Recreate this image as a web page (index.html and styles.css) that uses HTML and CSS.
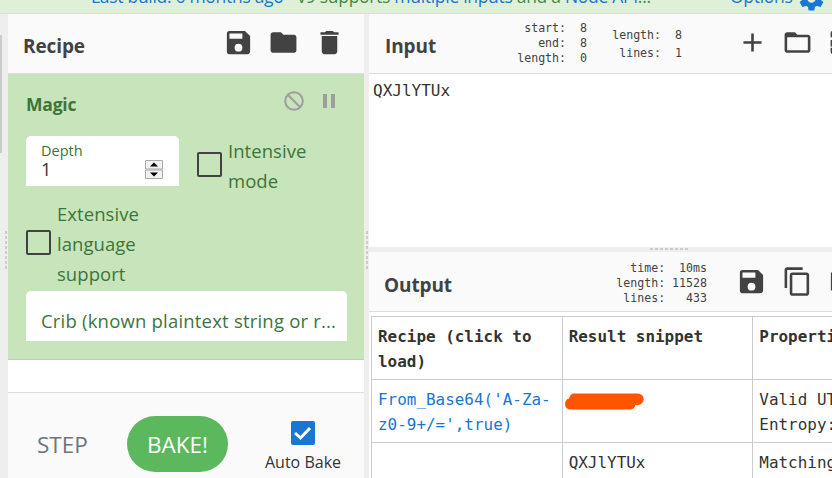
FILE: index.html
```html
<!DOCTYPE html>
<html lang="en">
<head>
<meta charset="utf-8">
<title>CyberChef</title>
<link rel="stylesheet" href="styles.css">
</head>
<body>
<header class="banner">
  <p class="notice"><a>Last build: 6 months ago</a> - v9 supports <a>multiple inputs</a> and a <a>Node API</a>...</p>
  <a class="options">Options</a>
  <svg class="gear" viewBox="0 0 24 24"><path d="M19.43 12.98c.04-.32.07-.64.07-.98s-.03-.66-.07-.98l2.11-1.65c.19-.15.24-.42.12-.64l-2-3.46c-.12-.22-.39-.3-.61-.22l-2.49 1c-.52-.4-1.08-.73-1.69-.98l-.38-2.65A.49.49 0 0 0 14 2h-4c-.25 0-.46.18-.49.42l-.38 2.65c-.61.25-1.17.59-1.69.98l-2.49-1c-.23-.09-.49 0-.61.22l-2 3.46c-.13.22-.07.49.12.64l2.11 1.65c-.04.32-.07.65-.07.98s.03.66.07.98l-2.11 1.65c-.19.15-.24.42-.12.64l2 3.46c.12.22.39.3.61.22l2.49-1c.52.4 1.08.73 1.69.98l.38 2.65c.03.24.24.42.49.42h4c.25 0 .46-.18.49-.42l.38-2.65c.61-.25 1.17-.59 1.69-.98l2.49 1c.23.09.49 0 .61-.22l2-3.46c.12-.22.07-.49-.12-.64l-2.11-1.65zM12 15.500a3.500 3.500 0 1 1 0-7 3.500 3.500 0 0 1 0 7z"/></svg>
</header>
<main class="workspace">
  <div class="gutter gutter-left"><i class="scroll"></i><i class="grip"></i></div>
  <section class="recipe">
    <div class="title">
      <h2>Recipe</h2>
      <div class="icons">
        <svg viewBox="0 0 24 24"><path d="M17 3H5a2 2 0 0 0-2 2v14a2 2 0 0 0 2 2h14c1.100 0 2-.9 2-2V7l-4-4zm-5 16a3 3 0 1 1 0-6 3 3 0 0 1 0 6zm3-10H5V5h10v4z"/></svg>
        <svg viewBox="0 0 24 24"><path d="M10 4H4c-1.100 0-2 .9-2 2v12c0 1.100.9 2 2 2h16c1.100 0 2-.9 2-2V8c0-1.100-.9-2-2-2h-8l-2-2z"/></svg>
        <svg viewBox="0 0 24 24"><path d="M6 19c0 1.100.9 2 2 2h8c1.100 0 2-.9 2-2V7H6v12zM19 4h-3.500l-1-1h-5l-1 1H5v2h14V4z"/></svg>
      </div>
    </div>
    <article class="operation">
      <div class="op-head">
        <h3>Magic</h3>
        <svg class="disable" viewBox="0 0 20 20"><circle cx="10" cy="10" r="8.800"/><path d="M3.800 3.800l12.400 12.400"/></svg>
        <svg class="pause" viewBox="0 0 14 14"><path d="M1 0h4v14H1zM9 0h4v14H9z"/></svg>
      </div>
      <div class="args">
        <div class="field depth">
          <div><label>Depth</label><b>1</b></div>
          <svg class="spin" viewBox="0 0 18 19"><path class="key" d="M.5.500h17v8.500H.5zM.5 10h17v8.500H.5z"/><path d="M5 6.500L9 2.500l4 4zM5 12.500l4 4 4-4z"/></svg>
        </div>
        <div class="check intensive"><i class="box"></i><span>Intensive<br>mode</span></div>
      </div>
      <div class="check extensive"><i class="box"></i><span>Extensive<br>language<br>support</span></div>
      <div class="field crib"><span>Crib (known plaintext string or r...</span></div>
    </article>
    <footer class="controls">
      <span class="step">STEP</span>
      <span class="bake"><span>BAKE!</span></span>
      <div class="auto">
        <svg viewBox="0 0 24 24"><rect width="24" height="24" rx="2"/><path d="M4 12l5.500 5L19 7"/></svg>
        <span>Auto Bake</span>
      </div>
    </footer>
  </section>
  <div class="gutter gutter-mid"><i class="grip"></i></div>
  <section class="io">
    <div class="title">
      <h2>Input</h2>
      <pre class="stats selection">start:  8
end:  8
length:  0</pre>
      <pre class="stats size">length:  8
lines:  1</pre>
      <div class="icons">
        <svg viewBox="0 0 24 24"><path d="M19 13h-6v6h-2v-6H5v-2h6V5h2v6h6v2z"/></svg>
        <svg viewBox="0 0 24 24"><path d="M20 6h-8l-2-2H4c-1.100 0-1.990.9-1.990 2L2 18c0 1.100.9 2 2 2h16c1.100 0 2-.9 2-2V8c0-1.100-.9-2-2-2zm0 12H4V8h16v10z"/></svg>
        <svg viewBox="0 0 24 24"><path d="M4 3h16v2H4v3H2V5a2 2 0 0 1 2-2zM2 10h12V6l6 6-6 6v-4H4v1H2zM2 16h2v3h16v2H4a2 2 0 0 1-2-2z"/></svg>
      </div>
    </div>
    <pre class="input-text">QXJlYTUx</pre>
    <div class="gutter-row"><i class="grip-row"></i></div>
    <div class="title out-title">
      <h2>Output</h2>
      <pre class="stats result">  time:  10ms
length: 11528
 lines:   433</pre>
      <div class="icons">
        <svg viewBox="0 0 24 24"><path d="M17 3H5a2 2 0 0 0-2 2v14a2 2 0 0 0 2 2h14c1.100 0 2-.9 2-2V7l-4-4zm-5 16a3 3 0 1 1 0-6 3 3 0 0 1 0 6zm3-10H5V5h10v4z"/></svg>
        <svg viewBox="0 0 24 24"><path d="M16 1H4c-1.100 0-2 .9-2 2v14h2V3h12V1zm3 4H8c-1.100 0-2 .9-2 2v14c0 1.100.9 2 2 2h11c1.100 0 2-.9 2-2V7c0-1.100-.9-2-2-2zm0 16H8V7h11v14z"/></svg>
        <svg viewBox="0 0 24 24"><path d="M3 5h18v14H3z"/></svg>
      </div>
    </div>
    <div class="output">
      <table>
        <tr><th>Recipe (click to<br>load)</th><th>Result snippet</th><th>Properties</th></tr>
        <tr><td><a>From_Base64('A-Za-<br>z0-9+/=',true)</a></td><td class="redacted"><svg viewBox="0 0 80 17"><path d="M9 .5h65a5.700 5.700 0 0 1 0 11.400h-2.500a6 6 0 0 1-5 4.600H6A5.600 5.600 0 0 1 5 5.600q1-4 4-5.100z"/></svg></td><td>Valid UTF8<br>Entropy: 2.75</td></tr>
        <tr><td></td><td>QXJlYTUx</td><td>Matching ops:</td></tr>
      </table>
    </div>
  </section>
</main>
</body>
</html>
```
FILE: styles.css
```css
* { box-sizing: border-box; }
body {
  margin: 0;
  width: 832px;
  height: 478px;
  overflow: hidden;
  display: flex;
  flex-direction: column;
  background: #fff;
  color: #424242;
  font-family: "Open Sans", sans-serif;
}
h2, h3, p, pre { margin: 0; }
svg { display: block; flex: none; }
i { display: block; }
a { color: #1976d2; }

.banner {
  flex: none;
  height: 14px;
  display: flex;
  align-items: flex-end;
  overflow: hidden;
  background: #dff0d8;
  border-bottom: 1px solid #ddd;
  color: #468847;
  font-size: 17.500px;
  line-height: 24px;
  white-space: nowrap;
}
.notice { flex: none; width: 639px; padding-left: 91px; margin-bottom: 5px; letter-spacing: -.3px; }
.options { flex: none; width: 67px; margin: 0 0 5px 91px; letter-spacing: -.3px; }
.gear { width: 29px; height: 29px; margin-bottom: 0; fill: #1976d2; }

.workspace { flex: 1; min-height: 0; display: flex; }
.gutter { flex: none; background: #eee; display: flex; flex-direction: column; }
.gutter-left { width: 8px; }
.gutter-mid { width: 5px; }
.grip { width: 2px; height: 38px; background: repeating-linear-gradient(#ccc 0 3px, #eee 3px 5px); }
.gutter-left .scroll { width: 2px; height: 118px; margin-top: 21px; background: #ccc; }
.gutter-left .grip { margin: 78px 0 0 5px; }
.gutter-mid .grip { margin: 217px 0 0 2px; }

.recipe { flex: none; width: 356px; display: flex; flex-direction: column; }
.title {
  flex: none;
  height: 60px;
  display: flex;
  align-items: center;
  background: #fafafa;
  border-bottom: 1px solid #ddd;
  padding-left: 15px;
}
h2 { font-size: 19px; line-height: 28px; margin-top: 5px; letter-spacing: -.1px; }
.icons { display: flex; gap: 14.500px; margin-bottom: 2px; }
.icons svg { width: 31px; height: 31px; fill: #424242; }
.recipe .icons { margin-left: auto; margin-right: 19.500px; }

.operation {
  flex: none;
  height: 286px;
  padding: 16px 17px 0 18px;
  background: #c8e4ba;
  border-bottom: 1px solid #b3d9a3;
  color: #3a763a;
}
.op-head { display: flex; align-items: center; height: 28px; }
h3 { font-size: 17.500px; line-height: 28px; letter-spacing: -.2px; }
.disable { width: 20px; height: 20px; margin: -6px 0 0 auto; fill: none; stroke: #9e9e9e; stroke-width: 2; }
.pause { width: 14px; height: 14px; margin: -6px 11px 0 18px; fill: #9e9e9e; }
.args { display: flex; margin-top: 18px; height: 64px; }
.field { background: #fff; border-radius: 5px 5px 0 0; height: 50px; }
.depth { width: 153px; display: flex; justify-content: space-between; padding: 5px 16px 0 15px; }
.depth label { display: block; font-size: 14.500px; line-height: 19px; }
.depth b { display: block; font-weight: 500; font-size: 18px; line-height: 19px; color: #333; }
.spin { width: 18px; height: 19px; margin-top: 19px; fill: #000; }
.spin .key { fill: #f0f0f0; stroke: #aaa; }
.check { display: flex; align-items: center; font-size: 18.500px; line-height: 30px; letter-spacing: .05px; }
.box { flex: none; width: 25px; height: 25px; border: 2px solid #424242; border-radius: 2px; }
.intensive { height: 60px; margin-left: 18px; gap: 6px; }
.intensive .box { margin-top: -3px; }
.extensive { height: 90px; gap: 6px; margin-top: -1px; }
.extensive .box { margin-top: -3px; }
.crib { margin-top: 2px; padding: 15px 0 0 15px; font-size: 18.500px; line-height: 29px; letter-spacing: .2px; white-space: nowrap; }

.controls {
  height: 86px;
  flex: none;
  margin-top: 32px;
  display: flex;
  background: #fafafa;
  border-top: 1px solid #ddd;
}
.step { width: 90px; margin: 35px 0 0 29px; font-size: 22.500px; line-height: 34px; color: #6c757d; }
.bake {
  width: 101px;
  height: 56px;
  margin-top: 23px;
  padding-top: 12px;
  border-radius: 28px;
  background: #5cb85c;
  color: #fff;
  font-size: 22.500px;
  line-height: 33px;
  text-align: center;
}
.auto { margin: 28px 0 0 35px; width: 80px; display: flex; flex-direction: column; align-items: center; font-size: 16px; line-height: 22px; color: #333; white-space: nowrap; }
.auto svg { width: 24px; height: 24px; margin-bottom: 6px; fill: #1976d2; }
.auto path { fill: none; stroke: #fff; stroke-width: 3; }

.io { flex: 1; min-width: 0; overflow: hidden; display: flex; flex-direction: column; }
pre, table { font-family: "DejaVu Sans Mono", monospace; }
.io .title { padding-left: 16px; }
.io .title h2 { width: 78px; flex: none; }
.io .out-title { padding-left: 15px; }
.io .out-title h2 { margin-top: 7px; }
.stats { flex: none; font-size: 11.600px; line-height: 15px; text-align: right; }
.selection { width: 70px; margin-left: 54px; }
.size { width: 70px; margin-left: 25px; line-height: 18px; }
.result { width: 92px; margin: 3px 0 0 153px; }
.io .icons { flex: none; margin-left: 54.500px; }
.result + .icons { margin-left: 29px; margin-top: 2px; }
.input-text { flex: none; height: 173px; padding: 4px 4px 0; color: #333; font-size: 16px; line-height: 25px; }
.gutter-row { flex: none; height: 5px; padding: 1px 0 0 281px; background: #eee; }
.grip-row { width: 38px; height: 2px; background: repeating-linear-gradient(90deg, #ccc 0 3px, #eee 3px 5px); }
.output { padding: 4px 0 0 2px; }
table { width: 573px; table-layout: fixed; border-collapse: collapse; color: #333; font-size: 15.950px; line-height: 25px; }
th, td { width: 190.500px; height: 63px; padding: 7px 6px 5px; border: 1px solid #ccc; text-align: left; vertical-align: top; white-space: nowrap; }
.redacted { padding: 13px 0 0 1px; }
.redacted svg { width: 80px; height: 17px; fill: #ff5500; }
```
